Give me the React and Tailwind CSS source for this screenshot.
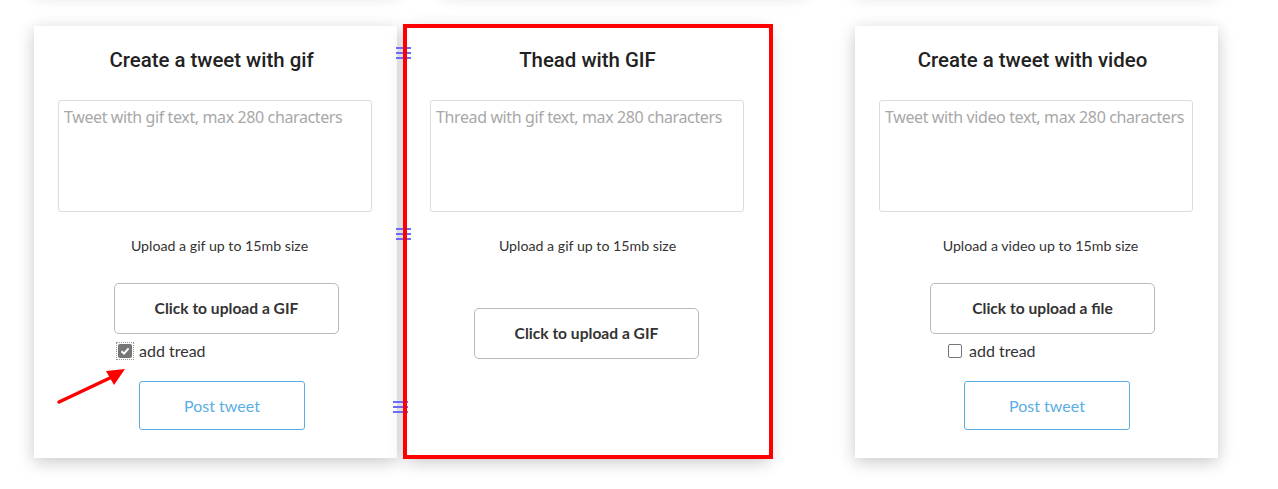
import { useState } from 'react';

const cards = [
  {
    title: 'Create a tweet with gif',
    titleShift: 'pr-[8px]',
    hintShift: 'pl-[8px]',
    placeholder: 'Tweet with gif text, max 280 characters',
    hint: 'Upload a gif up to 15mb size',
    upload: 'Click to upload a GIF',
    uploadLeft: 'ml-[80px]',
    uploadTop: 'mt-[27px]',
    thread: { left: 'ml-[82px]', checked: true, gap: 'gap-[5px]' },
    postLeft: 'ml-[105px]',
  },
  {
    title: 'Thead with GIF',
    titleShift: '',
    hintShift: '',
    placeholder: 'Thread with gif text, max 280 characters',
    hint: 'Upload a gif up to 15mb size',
    upload: 'Click to upload a GIF',
    uploadLeft: 'ml-[68px]',
    uploadTop: 'mt-[52px]',
    marked: true,
  },
  {
    title: 'Create a tweet with video',
    titleShift: 'pr-[8px]',
    hintShift: 'pl-[8px]',
    placeholder: 'Tweet with video text, max 280 characters',
    hint: 'Upload a video up to 15mb size',
    upload: 'Click to upload a file',
    uploadLeft: 'ml-[75px]',
    uploadTop: 'mt-[27px]',
    thread: { left: 'ml-[93px]', checked: false, gap: 'gap-[7px]' },
    postLeft: 'ml-[109px]',
  },
];

const lato = { fontFamily: 'Lato, "Liberation Sans", sans-serif' };

function Handle({ className }) {
  return (
    <div className={`absolute flex flex-col gap-[3px] w-[15px] ${className}`}>
      <span className="h-[2px] bg-[#6a6aff]" />
      <span className="h-[2px] bg-[#6a6aff]" />
      <span className="h-[2px] bg-[#6a6aff]" />
    </div>
  );
}

function ThreadBox({ checked }) {
  if (checked) {
    return (
      <span className="flex items-center justify-center w-[18px] h-[18px] border border-dotted border-[#999]">
        <span className="flex items-center justify-center w-[14px] h-[14px] rounded-[2px] bg-[#767676]">
          <svg width="10" height="10" viewBox="0 0 10 10">
            <path d="M1.5 5.2 L4 7.6 L8.6 2.4" fill="none" stroke="#fff" strokeWidth="2" />
          </svg>
        </span>
      </span>
    );
  }
  return <span className="w-[14px] h-[14px] rounded-[2px] border border-[#767676] bg-white" />;
}

function Card({ card, extra }) {
  const [text, setText] = useState('');
  const [thread, setThread] = useState(card.thread ? card.thread.checked : false);

  return (
    <div className={`relative w-[363px] h-[432px] shrink-0 bg-white shadow-[0_4px_16px_rgba(0,0,0,0.22)] pt-[22px] ${extra}`}>
      <h2
        className={`text-center text-[20.4px] leading-[24px] font-medium text-[#222] ${card.titleShift}`}
        style={{ fontFamily: 'Roboto, "Noto Sans", sans-serif' }}
      >
        {card.title}
      </h2>
      <textarea
        value={text}
        onChange={(e) => setText(e.target.value)}
        placeholder={card.placeholder}
        className="block mt-[28px] ml-[24px] w-[314px] h-[112px] resize-none rounded-[3px] border border-[#dcdcdc] pl-[5px] pr-[2px] py-[5px] text-[16px] leading-[22px] text-[#333] placeholder:text-[#a8a8a8] outline-none"
        style={{ fontFamily: '"Noto Sans", "Open Sans", sans-serif', letterSpacing: '-0.38px' }}
      />
      <p className={`mt-[24px] text-center text-[14.2px] leading-[20px] text-[#333] ${card.hintShift}`} style={lato}>
        {card.hint}
      </p>
      <button
        className={`block ${card.uploadTop} ${card.uploadLeft} w-[225px] h-[51px] rounded-[5px] border border-[#b9b9b9] bg-white text-[15.6px] font-bold text-[#333]`}
        style={lato}
      >
        {card.upload}
      </button>
      {card.thread && (
        <label
          className={`flex items-center ${card.thread.gap} mt-[8px] h-[18px] ${card.thread.left} cursor-pointer`}
          onClick={() => setThread(!thread)}
        >
          <ThreadBox checked={thread} />
          <span className="text-[16px] leading-[20px] text-[#333]" style={lato}>
            add tread
          </span>
        </label>
      )}
      {card.postLeft && (
        <button
          className={`block mt-[21px] ${card.postLeft} w-[166px] h-[49px] rounded-[3px] border border-[#5aaee3] bg-white text-[16px] text-[#5aaee3]`}
          style={lato}
        >
          Post tweet
        </button>
      )}
      {card.marked && (
        <div className="absolute -left-[3px] -right-[4px] -top-[2px] -bottom-[1px] border-[4px] border-[#ff0000] pointer-events-none z-10" />
      )}
    </div>
  );
}

export default function App() {
  return (
    <div className="relative w-[1278px] h-[489px] overflow-hidden bg-white">
      <div className="flex pl-[34px] -mt-[100px] h-[90px]">
        <div className="w-[363px] shrink-0 bg-white shadow-[0_4px_16px_rgba(0,0,0,0.2)]" />
        <div className="w-[363px] ml-[46px] shrink-0 bg-white shadow-[0_4px_16px_rgba(0,0,0,0.2)]" />
        <div className="w-[363px] ml-[49px] shrink-0 bg-white shadow-[0_4px_16px_rgba(0,0,0,0.2)]" />
      </div>
      <div className="flex pl-[34px] mt-[36px]">
        <Card card={cards[0]} extra="" />
        <Card card={cards[1]} extra="ml-[9px]" />
        <Card card={cards[2]} extra="ml-[86px]" />
      </div>

      <Handle className="left-[396px] top-[47px] z-0" />
      <Handle className="left-[396px] top-[228px] z-0" />
      <Handle className="left-[393px] top-[401px] z-0" />

      <svg className="absolute left-0 top-0 pointer-events-none" width="200" height="489">
        <line x1="59" y1="402" x2="112" y2="377" stroke="#ff0000" strokeWidth="3.5" strokeLinecap="round" />
        <polygon points="125,369 106,371 114,385" fill="#ff0000" />
      </svg>
    </div>
  );
}
